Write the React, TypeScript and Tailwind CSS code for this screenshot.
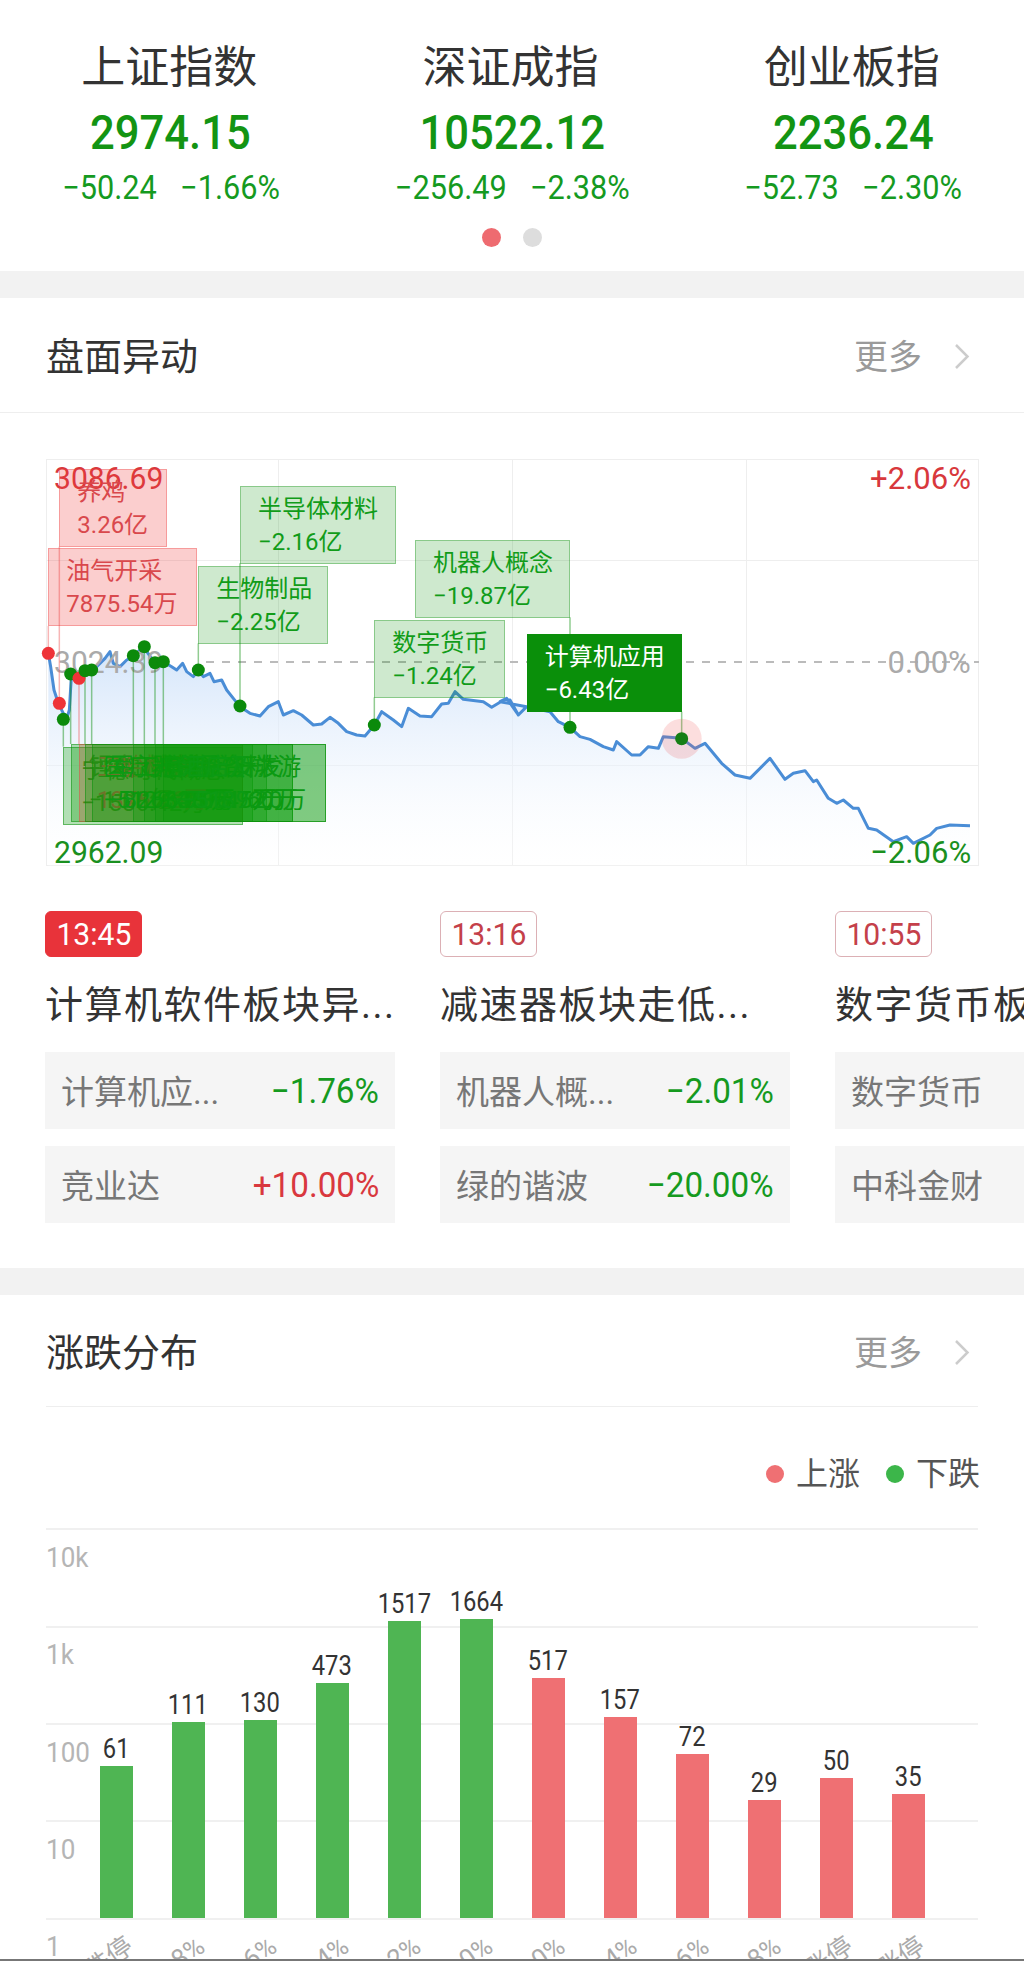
import React from "react";

const indices = [
  { name: "上证指数", value: "2974.15", change: "−50.24", pct: "−1.66%" },
  { name: "深证成指", value: "10522.12", change: "−256.49", pct: "−2.38%" },
  { name: "创业板指", value: "2236.24", change: "−52.73", pct: "−2.30%" },
];

const leftLine = [
  [55,610],[62,650],[72,720],[85,760],[100,790],[112,800],[118,780],[125,665],[140,680],[160,665],[180,660],[200,650],[225,625],[240,605],[250,640],[270,650],[290,630],[310,620],[340,590],[375,640],[400,635],[425,650],[440,660],[458,640],[470,665],[490,680],[505,660],[520,680],[540,670],[552,695],[575,690],[590,720],[610,745],[630,770],[660,790],[690,798],[715,770],[745,755],[760,795],[790,782],[815,795],[850,825],[875,822],[900,802],[925,820],[950,845],[980,855],[1005,858],[1033,825],[1055,785],[1090,810],[1115,830],[1135,775],[1170,798],[1205,800],[1235,762],[1255,760],[1275,725],[1300,748],[1360,755],[1385,772],[1425,748],[1440,750],[1465,795],[1490,770],
].map(([x, y]) => [x / 3 - 16, y / 3 - 9]);

const rightLine = [
  [0,755],[20,745],[55,795],[80,770],[150,785],[175,815],[210,832],[240,860],[270,868],[310,890],[340,900],[350,875],[395,915],[420,915],[445,890],[475,895],[490,860],[545,865],[585,895],[615,880],[665,940],[705,975],[750,985],[810,925],[855,988],[880,970],[915,962],[940,995],[950,990],[985,1045],[1010,1060],[1030,1050],[1060,1075],[1075,1075],[1105,1135],[1130,1140],[1180,1175],[1220,1160],[1240,1180],[1290,1155],[1310,1135],[1350,1125],[1410,1127],
].map(([x, y]) => [454 + x / 3, y / 3 - 9]);

const linePts = [...leftLine, ...rightLine];
const lineStr = linePts.map((p) => p.join(",")).join(" ");
const areaStr = `${linePts[0][0]},407 ${lineStr} ${linePts[linePts.length - 1][0]},407`;

const lx = (x: number) => x / 3 - 16;
const ly = (y: number) => y / 3 - 9;
const rx = (x: number) => 454 + x / 3;

type Box = { x0: number; x1: number; y0: number; label: string; val: string; red?: boolean; active?: boolean; dense?: boolean };

const upperBoxes: Box[] = [
  { x0: lx(88), x1: lx(410), y0: ly(57), label: "养鸡", val: "3.26亿", red: true },
  { x0: lx(55), x1: lx(500), y0: ly(295), label: "油气开采", val: "7875.54万", red: true },
  { x0: lx(630), x1: lx(1097), y0: ly(107), label: "半导体材料", val: "−2.16亿" },
  { x0: lx(505), x1: lx(895), y0: ly(348), label: "生物制品", val: "−2.25亿" },
  { x0: lx(1155), x1: rx(210), y0: ly(270), label: "机器人概念", val: "−19.87亿" },
  { x0: lx(1033), x1: lx(1425), y0: ly(510), label: "数字货币", val: "−1.24亿" },
];

const lowerBoxes: Box[] = [
  { x0: lx(100), x1: lx(640), y0: ly(890), label: "宁德时代概念", val: "−1586.42万", dense: true },
  { x0: lx(122), x1: lx(640), y0: ly(882), label: "锂电池概念", val: "−1.08亿", dense: true },
  { x0: lx(147), x1: lx(640), y0: ly(882), label: "三胎概念", val: "1375.26万", red: true },
  { x0: lx(165), x1: lx(670), y0: ly(882), label: "医疗器械", val: "−5129.33万", dense: true },
  { x0: lx(185), x1: lx(710), y0: ly(882), label: "军工电子", val: "−8263.91万", dense: true },
  { x0: lx(310), x1: lx(790), y0: ly(882), label: "光伏设备", val: "−6307.45万", dense: true },
  { x0: lx(343), x1: lx(790), y0: ly(882), label: "房地产开发", val: "−4518.72万", dense: true },
  { x0: lx(375), x1: lx(888), y0: ly(882), label: "食品饮料", val: "−7391.60万", dense: true },
  { x0: lx(400), x1: lx(888), y0: ly(882), label: "酒店及旅游", val: "−5139.20万", dense: true },
];

const activeBox: Box = { x0: rx(80), x1: rx(545), y0: ly(552), label: "计算机应用", val: "−6.43亿", active: true };

const markers: { x: number; y: number; to: number; red?: boolean; active?: boolean }[] = [
  { x: lx(55), y: ly(610), to: ly(528), red: true },
  { x: lx(88), y: ly(760), to: ly(290), red: true },
  { x: lx(100), y: ly(808), to: ly(890) },
  { x: lx(122), y: ly(672), to: ly(882) },
  { x: lx(147), y: ly(685), to: ly(882), red: true },
  { x: lx(165), y: ly(662), to: ly(882) },
  { x: lx(185), y: ly(660), to: ly(882) },
  { x: lx(310), y: ly(617), to: ly(882) },
  { x: lx(343), y: ly(590), to: ly(882) },
  { x: lx(375), y: ly(638), to: ly(882) },
  { x: lx(400), y: ly(635), to: ly(882) },
  { x: lx(505), y: ly(660), to: ly(580) },
  { x: lx(630), y: ly(768), to: ly(340) },
  { x: lx(1033), y: ly(825), to: ly(742) },
  { x: rx(210), y: ly(832), to: ly(502) },
  { x: rx(545), y: ly(866), to: ly(785), active: true },
];

function AnnotationBox({ b }: { b: Box }) {
  const cls = b.active
    ? "bg-[#0a8f0a] border-[#0a8f0a] text-white"
    : b.red
      ? "bg-[#ee3c3c]/25 border-[#ee3c3c]/35 text-[#d9484c]"
      : b.dense
        ? "bg-[#0a9a0a]/30 border-[#0a8f0a]/50 text-[#0c9a14]"
        : "bg-[#0a8f0a]/20 border-[#0a8f0a]/35 text-[#119c19]";
  return (
    <div
      className={`absolute h-[78px] border pl-[17px] pt-[6px] text-[24px] leading-[33px] whitespace-nowrap overflow-hidden ${cls}`}
      style={{ left: b.x0, top: b.y0, width: b.x1 - b.x0 }}
    >
      <div>{b.label}</div>
      <div>{b.val}</div>
    </div>
  );
}

function IntradayChart() {
  return (
    <div className="relative ml-[46px] w-[933px] h-[407px] outline outline-[#eeeeee] -outline-offset-1">
      <div className="absolute left-0 right-0 top-[101px] h-px bg-[#eeeeee]" />
      <div className="absolute left-0 right-0 top-[306px] h-px bg-[#eeeeee]" />
      <div className="absolute top-0 bottom-0 left-[232px] w-px bg-[#eeeeee]" />
      <div className="absolute top-0 bottom-0 left-[466px] w-px bg-[#eeeeee]" />
      <div className="absolute top-0 bottom-0 left-[700px] w-px bg-[#eeeeee]" />

      <svg className="absolute left-0 top-0 overflow-visible" width="933" height="407">
        <defs>
          <linearGradient id="area" x1="0" y1="0" x2="0" y2="1">
            <stop offset="0" stopColor="#cfe2fa" stopOpacity="0.9" />
            <stop offset="1" stopColor="#ffffff" stopOpacity="0.2" />
          </linearGradient>
        </defs>
        <polygon points={areaStr} fill="url(#area)" />
        <line x1="160" y1="203" x2="933" y2="203" stroke="#bbbbbb" strokeWidth="2" strokeDasharray="8 8" />
        <polyline points={lineStr} fill="none" stroke="#4a8dd6" strokeWidth="3" strokeLinejoin="round" />
      </svg>

      <div className="absolute left-[8px] top-[3px] origin-left scale-x-[0.94] text-[32px] leading-[32px] text-[#d8383c]">3086.69</div>
      <div className="absolute left-[8px] top-[187px] origin-left scale-x-[0.94] text-[32px] leading-[32px] text-[#aaaaaa]">3024.39</div>
      <div className="absolute left-[8px] top-[377px] origin-left scale-x-[0.94] text-[32px] leading-[32px] text-[#1a9020]">2962.09</div>
      <div className="absolute right-[8px] top-[3px] origin-right scale-x-[0.97] text-[32px] leading-[32px] text-[#d8383c]">+2.06%</div>
      <div className="absolute right-[8px] top-[187px] origin-right scale-x-[0.97] text-[32px] leading-[32px] text-[#aaaaaa]">0.00%</div>
      <div className="absolute right-[8px] top-[377px] origin-right scale-x-[0.97] text-[32px] leading-[32px] text-[#1a9020]">−2.06%</div>

      <svg className="absolute left-0 top-0 overflow-visible" width="933" height="407">
        {markers.map((m, i) => (
          <line
            key={i}
            x1={m.x}
            y1={m.y}
            x2={m.x}
            y2={m.to}
            stroke={m.red ? "#ee5c5c" : "#0a8f0a"}
            strokeOpacity="0.45"
            strokeWidth="1.5"
          />
        ))}
      </svg>

      {upperBoxes.map((b) => (
        <AnnotationBox key={b.label} b={b} />
      ))}
      {lowerBoxes.map((b) => (
        <AnnotationBox key={b.label} b={b} />
      ))}
      <AnnotationBox b={activeBox} />

      <svg className="absolute left-0 top-0 overflow-visible" width="933" height="407">
        {markers.map((m, i) => (
          <g key={i}>
            {m.active && <circle cx={m.x} cy={m.y} r="20" fill="#ee5c5c" fillOpacity="0.2" />}
            <circle cx={m.x} cy={m.y} r="6.5" fill={m.red ? "#ee3338" : m.active ? "#157f15" : "#0b8a0b"} />
          </g>
        ))}
      </svg>
    </div>
  );
}

const cards = [
  {
    time: "13:45",
    active: true,
    title: "计算机软件板块异...",
    rows: [
      { name: "计算机应...", pct: "−1.76%", up: false },
      { name: "竞业达", pct: "+10.00%", up: true },
    ],
  },
  {
    time: "13:16",
    title: "减速器板块走低...",
    rows: [
      { name: "机器人概...", pct: "−2.01%", up: false },
      { name: "绿的谐波", pct: "−20.00%", up: false },
    ],
  },
  {
    time: "10:55",
    title: "数字货币板块异...",
    rows: [
      { name: "数字货币", pct: "−1.24%", up: false },
      { name: "中科金财", pct: "−10.00%", up: false },
    ],
  },
];

function More() {
  return (
    <div className="flex items-center mr-[8px]">
      <span className="text-[34px] leading-[40px] text-[#9a9a9a]">更多</span>
      <svg className="ml-[32px]" width="16" height="27" viewBox="0 0 16 27" fill="none">
        <path d="M2 2 L13.5 13.5 L2 25" stroke="#cccccc" strokeWidth="2.5" />
      </svg>
    </div>
  );
}

const bars = [
  { v: 61, top: 1765.6, l: "跌停", up: false },
  { v: 111, top: 1722, l: "−8%", up: false },
  { v: 130, top: 1720.4, l: "−6%", up: false },
  { v: 473, top: 1683, l: "−4%", up: false },
  { v: 1517, top: 1620.6, l: "−2%", up: false },
  { v: 1664, top: 1619, l: "−0%", up: false },
  { v: 517, top: 1678, l: "0%", up: true },
  { v: 157, top: 1717, l: "4%", up: true },
  { v: 72, top: 1753.7, l: "6%", up: true },
  { v: 29, top: 1800, l: "8%", up: true },
  { v: 50, top: 1777.5, l: "涨停", up: true },
  { v: 35, top: 1793.6, l: "涨停", up: true },
];

const gridTops = ["top-0", "top-[98px]", "top-[195px]", "top-[292px]", "top-[390px]"];
const yLabels = [
  { t: "10k", c: "top-[15px]" },
  { t: "1k", c: "top-[112px]" },
  { t: "100", c: "top-[210px]" },
  { t: "10", c: "top-[307px]" },
  { t: "1", c: "top-[404px]" },
];

function Distribution() {
  return (
    <div className="relative h-[431px] overflow-hidden">
      {gridTops.map((c) => (
        <div key={c} className={`absolute left-0 right-0 h-[2px] bg-[#f0f0f0] ${c}`} />
      ))}
      {yLabels.map((y) => (
        <div key={y.t} className={`absolute left-0 origin-left scale-x-[0.93] text-[28px] leading-[30px] text-[#b5b5b5] ${y.c}`}>
          {y.t}
        </div>
      ))}
      <div className="absolute left-[34px] top-0 h-[390px] flex items-end">
        {bars.map((b) => (
          <div key={b.v} className="w-[72px] flex flex-col items-center">
            <div className="mb-[2px] scale-x-[0.88] text-[27px] leading-[30px] text-[#333333]">{b.v}</div>
            <div
              className={`w-[33px] ${b.up ? "bg-[#ef7073]" : "bg-[#4fb553]"}`}
              style={{ height: 1918 - b.top }}
            />
          </div>
        ))}
      </div>
      <div className="absolute left-[34px] top-[390px] flex">
        {bars.map((b) => (
          <div key={b.v} className="relative w-[72px] h-[41px]">
            <span className="absolute right-[22px] top-[10px] origin-right rotate-[-35deg] text-[26px] leading-[30px] whitespace-nowrap text-[#aaaaaa]">
              {b.l}
            </span>
          </div>
        ))}
      </div>
    </div>
  );
}

export default function App() {
  return (
    <div className="bg-white overflow-hidden [font-family:Roboto,'Noto_Sans_CJK_SC',sans-serif]">
      <section className="pt-[42px] pb-[24px]">
        <div className="grid grid-cols-3">
          {indices.map((i) => (
            <div key={i.name} className="flex flex-col items-center">
              <div className="pr-[3px] text-[44px] leading-[52px] text-[#333333]">{i.name}</div>
              <div className="mt-[11px] scale-x-[0.89] text-[49px] leading-[56px] font-medium text-[#139413]">{i.value}</div>
              <div className="mt-[7px] flex gap-[25px] scale-x-[0.93] text-[33px] leading-[40px] text-[#159a1f]">
                <span>{i.change}</span>
                <span>{i.pct}</span>
              </div>
            </div>
          ))}
        </div>
        <div className="mt-[20px] flex justify-center gap-[22px] pr-[1px]">
          <span className="w-[19px] h-[19px] rounded-full bg-[#ee6b70]" />
          <span className="w-[19px] h-[19px] rounded-full bg-[#dddddd]" />
        </div>
      </section>

      <div className="h-[27px] bg-[#f2f2f2]" />

      <section>
        <div className="h-[115px] pt-[3px] px-[46px] flex items-center justify-between border-b border-[#eeeeee]">
          <h2 className="text-[38px] leading-[46px] font-normal text-[#333333]">盘面异动</h2>
          <More />
        </div>
        <div className="pt-[46px]">
          <IntradayChart />
        </div>
        <div className="mt-[45px] pl-[45px] pb-[45px] flex gap-[45px] overflow-hidden">
          {cards.map((c) => (
            <div key={c.time} className="w-[350px] shrink-0">
              <div
                className={`w-[97px] h-[46px] rounded-[6px] border flex items-center justify-center ${
                  c.active
                    ? "bg-[#e8333a] border-[#e8333a] text-white"
                    : "bg-white border-[#dcb0b5] text-[#c4404a]"
                }`}
              >
                <span className="scale-x-[0.94] text-[32px] leading-[44px]">{c.time}</span>
              </div>
              <div className="mt-[25px] text-[38px] leading-[46px] tracking-[1.5px] whitespace-nowrap text-[#333333]">
                {c.title}
              </div>
              <div className="mt-[24px] flex flex-col gap-[17px]">
                {c.rows.map((r) => (
                  <div
                    key={r.name}
                    className="h-[77px] px-[16px] pt-[4px] bg-[#f5f5f5] flex items-center justify-between"
                  >
                    <span className="text-[33px] text-[#777777]">{r.name}</span>
                    <span
                      className={`origin-right scale-x-[0.95] text-[35px] ${
                        r.up ? "text-[#d9383e]" : "text-[#159a1f]"
                      }`}
                    >
                      {r.pct}
                    </span>
                  </div>
                ))}
              </div>
            </div>
          ))}
        </div>
      </section>

      <div className="h-[27px] bg-[#f2f2f2]" />

      <section className="px-[46px]">
        <div className="h-[112px] pt-[4px] flex items-center justify-between border-b border-[#eeeeee]">
          <h2 className="text-[38px] leading-[46px] font-normal text-[#333333]">涨跌分布</h2>
          <More />
        </div>
        <div className="h-[121px] pt-[47px] flex justify-end">
          <div className="h-[40px] -mr-[2px] flex items-center text-[32px] text-[#555555]">
            <span className="w-[18px] h-[18px] rounded-full bg-[#ef7073]" />
            <span className="ml-[12px]">上涨</span>
            <span className="ml-[26px] w-[18px] h-[18px] rounded-full bg-[#3cb64a]" />
            <span className="ml-[12px]">下跌</span>
          </div>
        </div>
        <Distribution />
      </section>
      <div className="h-[2px] bg-[#777777]" />
      <div className="h-[8px] bg-white" />
    </div>
  );
}
